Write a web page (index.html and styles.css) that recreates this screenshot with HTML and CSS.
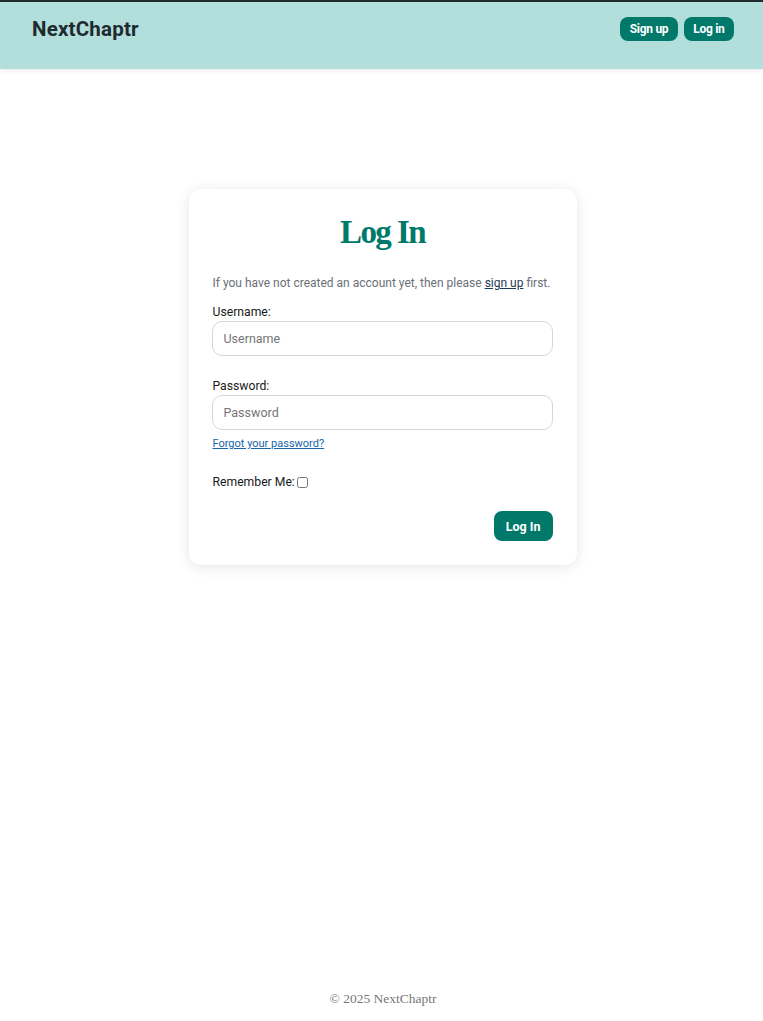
FILE: index.html
```html
<!DOCTYPE html>
<html>
<head>
<meta charset="utf-8">
<link rel="stylesheet" href="styles.css">
</head>
<body>
<header class="topbar">
  <div class="brand">NextChaptr</div>
  <nav class="nav">
    <a class="pill" href="#">Sign up</a>
    <a class="pill" href="#">Log in</a>
  </nav>
</header>
<main class="main">
  <section class="card">
    <h1 class="title">Log In</h1>
    <p class="intro">If you have not created an account yet, then please <a href="#" class="link-dark">sign up</a> first.</p>
    <form class="form">
      <label class="label">Username:</label>
      <input class="input" type="text" placeholder="Username">
      <label class="label label-gap">Password:</label>
      <input class="input" type="password" placeholder="Password">
      <a href="#" class="forgot">Forgot your password?</a>
      <div class="remember">Remember Me: <input type="checkbox" class="check"></div>
      <div class="actions"><button type="button" class="submit">Log In</button></div>
    </form>
  </section>
</main>
<footer class="footer">© 2025 NextChaptr</footer>
</body>
</html>
```
FILE: styles.css
```css
* { box-sizing: border-box; }
html, body { margin: 0; padding: 0; }
body {
  font-family: Roboto, "Liberation Sans", sans-serif;
  background: #fff;
  min-height: 1021px;
  display: flex;
  flex-direction: column;
}
.topbar {
  height: 69px;
  background: #b2dfdb;
  border-top: 2px solid #1f2a2c;
  display: flex;
  align-items: center;
  justify-content: space-between;
  padding: 0 29px 13px 32px;
  box-shadow: 0 2px 4px rgba(0,0,0,0.08);
}
.brand {
  font-size: 20.5px;
  font-weight: 700;
  color: #1e2a30;
  letter-spacing: 0.2px;
}
.nav { display: flex; gap: 6px; }
.pill {
  background: #00796b;
  color: #fff;
  text-decoration: none;
  font-size: 12px;
  font-weight: 700;
  letter-spacing: -0.3px;
  height: 24px;
  padding: 0 9.5px;
  border-radius: 8px;
  display: flex;
  align-items: center;
}
.main {
  flex: 1;
  display: flex;
  justify-content: center;
  padding-top: 120px;
  padding-left: 2px;
}
.card {
  width: 388px;
  height: 376px;
  background: #fff;
  border-radius: 12px;
  box-shadow: 0 2px 14px rgba(0,0,0,0.1);
  padding: 20px 24px 24px 24px;
}
.title {
  margin: 0;
  text-align: center;
  font-family: "Liberation Serif", "DejaVu Serif", serif;
  font-weight: 700;
  font-size: 33px;
  letter-spacing: -1.6px;
  color: #00796b;
  line-height: 46px;
}
.intro {
  margin: 20px 0 0 0;
  font-size: 12px;
  color: #6b7077;
  line-height: 16px;
  white-space: nowrap;
}
.link-dark { color: #1b3a57; }
.form { display: flex; flex-direction: column; margin-top: 13px; }
.label { font-size: 12.2px; color: #1a1a1a; line-height: 16px; }
.label-gap { margin-top: 22px; }
.input {
  margin: 1px 0 0 -1px;
  height: 35px;
  border: 1px solid #d6d6d6;
  border-radius: 10px;
  padding: 0 11px;
  font-family: Roboto, "Liberation Sans", sans-serif;
  font-size: 12.5px;
  color: #333;
  width: 341px;
}
.input::placeholder { color: #757575; }
.forgot {
  margin-top: 7px;
  font-size: 11px;
  color: #1565a8;
  line-height: 14px;
  align-self: flex-start;
}
.remember {
  margin-top: 23px;
  font-size: 12.2px;
  color: #1a1a1a;
  display: flex;
  align-items: center;
  line-height: 16px;
}
.check { margin: 1px 0 0 2px; width: 11px; height: 11px; }
.actions { display: flex; justify-content: flex-end; margin-top: 21px; }
.submit {
  background: #00796b;
  color: #fff;
  border: none;
  font-family: Roboto, "Liberation Sans", sans-serif;
  font-weight: 700;
  font-size: 12.5px;
  height: 30px;
  padding: 0 12px;
  border-radius: 8px;
}
.footer {
  text-align: center;
  font-family: "Liberation Serif", "DejaVu Serif", serif;
  font-size: 13.5px;
  color: #777;
  padding-bottom: 12px;
  padding-left: 3px;
  height: 30px;
}
```
